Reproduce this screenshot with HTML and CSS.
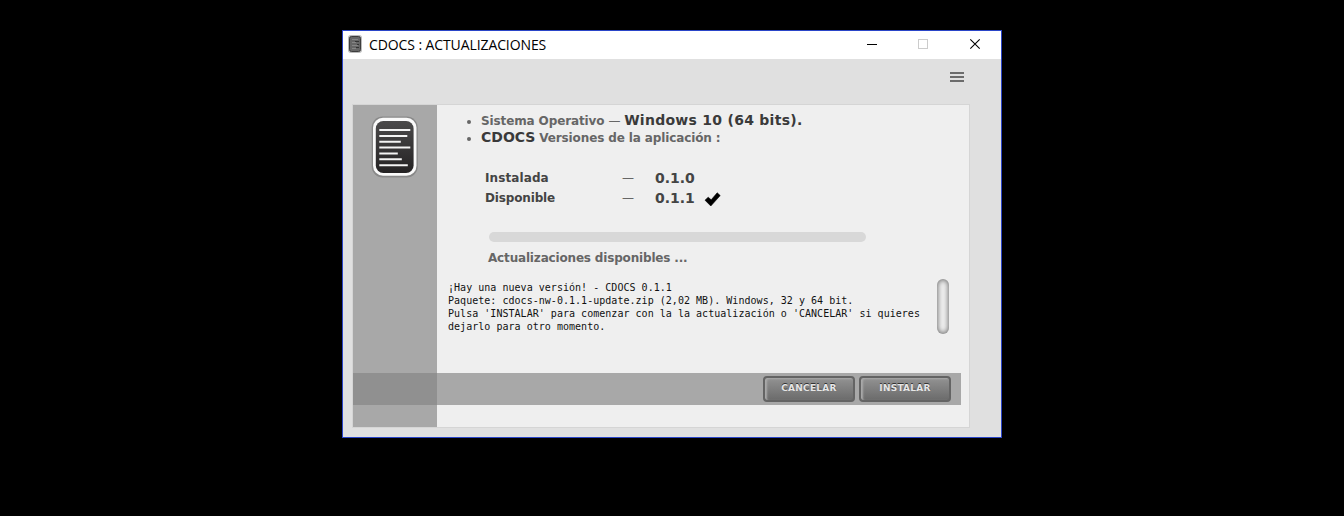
FILE: index.html
```
<!DOCTYPE html>
<html lang="es">
<head>
<meta charset="utf-8">
<title>CDOCS : ACTUALIZACIONES</title>
<link rel="stylesheet" href="styles.css">
</head>
<body>
<main class="window">
  <header class="titlebar">
    <svg class="app-icon" width="14" height="18" viewBox="0 0 14 18">
      <rect width="14" height="18" rx="3" fill="#bbb"/>
      <rect x="1.500" y="1.500" width="11" height="15" rx="2" fill="#666" stroke="#3d3d3d"/>
      <path d="M4 4.500h6M4 7.500h4M4 10.500h6M4 13.500h4" stroke="#858585"/>
      <path d="M7 6.500h4M9 9.500h2M8 12.500h3" stroke="#333"/>
    </svg>
    <h1 class="title">CDOCS : ACTUALIZACIONES</h1>
    <svg class="controls" width="115" height="12" viewBox="0 0 115 12" fill="none">
      <path d="M0 6.500h10" stroke="#000"/>
      <rect x="51.500" y="1.500" width="9" height="9" stroke="#ccc"/>
      <path d="M103.300 1.300l9.400 9.400M112.700 1.300l-9.400 9.400" stroke="#000" stroke-width="1.100"/>
    </svg>
  </header>
  <nav class="toolbar">
    <svg class="menu" width="14" height="10" viewBox="0 0 14 10"><path d="M0 1h14M0 5h14M0 9h14" stroke="#6c6c6c" stroke-width="2"/></svg>
  </nav>
  <section class="panel">
    <aside class="sidebar">
      <svg width="48" height="63" viewBox="0 0 48 63">
        <defs><linearGradient id="ink" x2="0" y2="1"><stop stop-color="#4b4a4b"/><stop offset="1" stop-color="#242223"/></linearGradient></defs>
        <rect x=".7" y=".5" width="46" height="61" rx="11" fill="#898989"/>
        <rect x="2" y="1.800" width="43.500" height="58" rx="10" fill="#fafafa"/>
        <rect x="4.800" y="5" width="37.800" height="52" rx="7.500" fill="url(#ink)"/>
        <path d="M8.300 14h31M8.300 20h28M8.300 25.700h21.500M8.300 31.500h31M8.300 37.500h18.500M8.300 43.300h22.500M8.300 49.200h28.500" stroke="#f4f4f4" stroke-width="1.900"/>
      </svg>
    </aside>
    <div class="content">
      <ul class="facts">
        <li><span class="os">Sistema Operativo <i class="rule">—</i></span> <strong class="os-name">Windows 10 (64 bits).</strong></li>
        <li><strong class="product">CDOCS</strong> <span class="versions-label">Versiones de la aplicación :</span></li>
      </ul>
      <div class="versions">
        <span class="installed">Instalada</span><span class="dash">—</span><b class="number">0.1.0</b><span></span>
        <span class="available">Disponible</span><span class="dash">—</span><b class="number">0.1.1</b>
        <svg class="check" width="17" height="15" viewBox="0 0 17 15"><path d="M1 8.200l3.200-3 3 2.600L13.200.8 16.200 3.600 6.800 14z" fill="#000" stroke="#000" stroke-width=".6" stroke-linejoin="round"/></svg>
      </div>
      <div class="progress"></div>
      <p class="status">Actualizaciones disponibles ...</p>
      <div class="details">
        <pre class="log">¡Hay una nueva versión! - CDOCS 0.1.1
Paquete: cdocs-nw-0.1.1-update.zip (2,02 MB). Windows, 32 y 64 bit.
Pulsa 'INSTALAR' para comenzar con la la actualización o 'CANCELAR' si quieres
dejarlo para otro momento.</pre>
        <div class="scroll-thumb"></div>
      </div>
    </div>
    <footer class="actions">
      <button class="button">CANCELAR</button>
      <button class="button">INSTALAR</button>
    </footer>
  </section>
</main>
</body>
</html>
```

FILE: styles.css
```
* { box-sizing: border-box; }
body { margin: 0; height: 516px; padding-top: 30px; background: #000; font-family: "DejaVu Sans", Verdana, sans-serif; overflow: hidden; }
.window { width: 660px; height: 408px; margin: 0 auto; border: 1px solid #2a45c8; background: #e0e0e0; }
.titlebar { height: 28px; display: flex; align-items: center; background: #fff; padding: 0 19px 0 5px; }
.app-icon { margin-top: -2px; }
.title { margin: -2px auto 0 7px; font: 400 14px "Open Sans", "Noto Sans", sans-serif; letter-spacing: -.1px; color: #000; white-space: nowrap; }
.controls { margin-top: -2px; }
.toolbar { height: 45px; display: flex; justify-content: flex-end; padding: 13px 37px 0 0; }
.panel { position: relative; width: 618px; height: 324px; margin-left: 9px; border: 1px solid #d5d5d5; background: #efefef; display: grid; grid-template-columns: 84px 1fr; }
.sidebar { background: #a8a8a8; padding: 11px 0 0 18px; }
.content { min-width: 0; }
.facts { margin: 0; padding: 7px 0 0 44px; font-size: 12px; color: #666; }
.facts li { height: 17px; line-height: 17px; font-weight: 400; white-space: nowrap; }
.facts span { font-weight: 700; letter-spacing: -.12px; }
.facts .rule { font-style: normal; font-weight: 400; }
.facts strong { color: #3a3a3a; font-size: 14px; }
.os-name { letter-spacing: .27px; }
.versions { display: grid; grid-template-columns: 137px 33px 49px 1fr; grid-auto-rows: 20px; line-height: 20px; margin: 22px 0 0 48px; font-size: 12px; font-weight: 700; color: #444; }
.installed { letter-spacing: .1px; }
.available { letter-spacing: -.15px; }
.dash { font-weight: 400; color: #666; }
.number { font-size: 14px; }
.check { margin-top: 4px; }
.progress { width: 377px; height: 10px; margin: 24px 0 0 52px; border-radius: 5px; background: #d8d8d8; }
.status { margin: 8px 0 0 51px; font-size: 12px; line-height: 17px; font-weight: 700; letter-spacing: -.17px; color: #666; }
.details { display: flex; justify-content: space-between; padding: 12px 20px 0 11px; }
.log { margin: 2px 0 0; font: 10px/13px "DejaVu Sans Mono", monospace; letter-spacing: .03px; color: #111; }
.scroll-thumb { width: 12px; height: 55px; border-radius: 6px; background: #eee; box-shadow: inset 0 0 5px 1px #777; }
.actions { position: absolute; left: 0; top: 268px; width: 608px; height: 32px; display: flex; justify-content: flex-end; gap: 4px; padding: 3px 10px 0 0; background: rgba(132, 132, 132, .662); }
.button { width: 92px; height: 26px; padding: 0 0 3px; border: 2px solid #646464; border-radius: 4px; background: linear-gradient(#929292, #6b6b6b); box-shadow: inset 2px 1px 2px #aaa; color: #e6e6e6; font: 700 9px "DejaVu Sans", sans-serif; letter-spacing: .25px; text-shadow: 0 -1px 0 #333; }
```
